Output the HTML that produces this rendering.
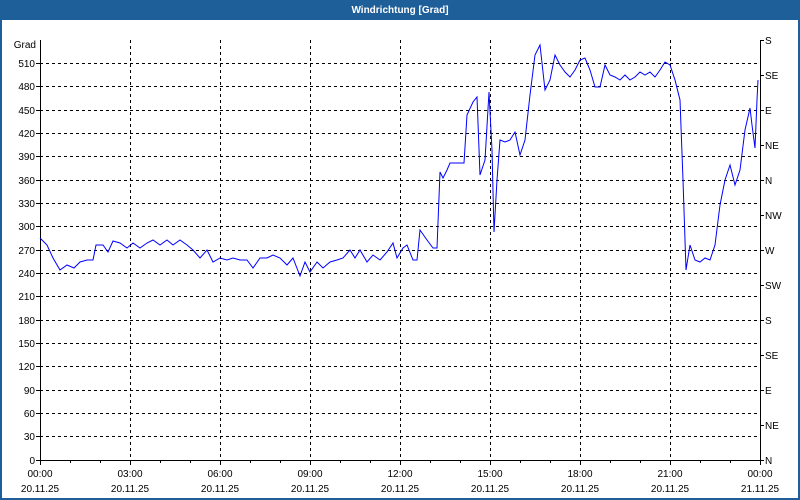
<!DOCTYPE html>
<html><head><style>
html,body{margin:0;padding:0;width:800px;height:500px;overflow:hidden;background:#fff;font-family:"Liberation Sans",sans-serif}
</style></head><body>
<svg width="800" height="500" xmlns="http://www.w3.org/2000/svg" font-family="Liberation Sans, sans-serif" font-size="10">
<rect x="0" y="0" width="800" height="500" fill="#1f5f99"/>
<rect x="2" y="20" width="796" height="478" fill="#fff"/>
<text x="400" y="13" fill="#fff" font-weight="bold" text-anchor="middle" font-size="10">Windrichtung [Grad]</text>
<g stroke="#000" stroke-dasharray="3,3" stroke-width="1">
<line x1="40" y1="63.5" x2="760" y2="63.5"/><line x1="40" y1="86.5" x2="760" y2="86.5"/><line x1="40" y1="110.5" x2="760" y2="110.5"/><line x1="40" y1="133.5" x2="760" y2="133.5"/><line x1="40" y1="156.5" x2="760" y2="156.5"/><line x1="40" y1="180.5" x2="760" y2="180.5"/><line x1="40" y1="203.5" x2="760" y2="203.5"/><line x1="40" y1="226.5" x2="760" y2="226.5"/><line x1="40" y1="250.5" x2="760" y2="250.5"/><line x1="40" y1="273.5" x2="760" y2="273.5"/><line x1="40" y1="296.5" x2="760" y2="296.5"/><line x1="40" y1="320.5" x2="760" y2="320.5"/><line x1="40" y1="343.5" x2="760" y2="343.5"/><line x1="40" y1="366.5" x2="760" y2="366.5"/><line x1="40" y1="390.5" x2="760" y2="390.5"/><line x1="40" y1="413.5" x2="760" y2="413.5"/><line x1="40" y1="436.5" x2="760" y2="436.5"/>
<line x1="130.5" y1="40" x2="130.5" y2="460"/><line x1="220.5" y1="40" x2="220.5" y2="460"/><line x1="310.5" y1="40" x2="310.5" y2="460"/><line x1="400.5" y1="40" x2="400.5" y2="460"/><line x1="490.5" y1="40" x2="490.5" y2="460"/><line x1="580.5" y1="40" x2="580.5" y2="460"/><line x1="670.5" y1="40" x2="670.5" y2="460"/>
</g>
<g stroke="#000" stroke-width="1">
<polyline points="40.5,40 40.5,460.5 760.5,460.5 760.5,40" fill="none"/>
<path d="M36 63.5h4M36 86.5h4M36 110.5h4M36 133.5h4M36 156.5h4M36 180.5h4M36 203.5h4M36 226.5h4M36 250.5h4M36 273.5h4M36 296.5h4M36 320.5h4M36 343.5h4M36 366.5h4M36 390.5h4M36 413.5h4M36 436.5h4M36 460.5h4"/>
<path d="M760 40.5h4M760 75.5h4M760 110.5h4M760 145.5h4M760 180.5h4M760 215.5h4M760 250.5h4M760 285.5h4M760 320.5h4M760 355.5h4M760 390.5h4M760 425.5h4M760 460.5h4"/>
<path d="M40.5 460v5M70.5 460v3M100.5 460v3M130.5 460v5M160.5 460v3M190.5 460v3M220.5 460v5M250.5 460v3M280.5 460v3M310.5 460v5M340.5 460v3M370.5 460v3M400.5 460v5M430.5 460v3M460.5 460v3M490.5 460v5M520.5 460v3M550.5 460v3M580.5 460v5M610.5 460v3M640.5 460v3M670.5 460v5M700.5 460v3M730.5 460v3M760.5 460v5"/>
</g>
<g text-anchor="end" fill="#000">
<text x="36" y="48">Grad</text>
<text x="35" y="67">510</text><text x="35" y="90">480</text><text x="35" y="114">450</text><text x="35" y="137">420</text><text x="35" y="160">390</text><text x="35" y="184">360</text><text x="35" y="207">330</text><text x="35" y="230">300</text><text x="35" y="254">270</text><text x="35" y="277">240</text><text x="35" y="300">210</text><text x="35" y="324">180</text><text x="35" y="347">150</text><text x="35" y="370">120</text><text x="35" y="394">90</text><text x="35" y="417">60</text><text x="35" y="440">30</text><text x="35" y="464">0</text>
</g>
<g fill="#000">
<text x="765" y="44">S</text><text x="765" y="79">SE</text><text x="765" y="114">E</text><text x="765" y="149">NE</text><text x="765" y="184">N</text><text x="765" y="219">NW</text><text x="765" y="254">W</text><text x="765" y="289">SW</text><text x="765" y="324">S</text><text x="765" y="359">SE</text><text x="765" y="394">E</text><text x="765" y="429">NE</text><text x="765" y="464">N</text>
</g>
<g text-anchor="middle" fill="#000">
<text x="40" y="477">00:00</text><text x="130" y="477">03:00</text><text x="220" y="477">06:00</text><text x="310" y="477">09:00</text><text x="400" y="477">12:00</text><text x="490" y="477">15:00</text><text x="580" y="477">18:00</text><text x="670" y="477">21:00</text><text x="760" y="477">00:00</text>
<text x="40" y="492">20.11.25</text><text x="130" y="492">20.11.25</text><text x="220" y="492">20.11.25</text><text x="310" y="492">20.11.25</text><text x="400" y="492">20.11.25</text><text x="490" y="492">20.11.25</text><text x="580" y="492">20.11.25</text><text x="670" y="492">20.11.25</text><text x="760" y="492">21.11.25</text>
</g>
<polyline fill="none" stroke="#0000ff" stroke-width="1" points="40,238 47,245 53,258 60,270 67,265 74,268 80,262 87,260 93,260 96,245 103,245 108,252 113,241 120,243 127,248 133,243 140,248 147,243 153,240 160,245 167,240 173,245 180,240 187,245 193,250 200,258 207,250 213,262 220,258 227,260 233,258 240,260 247,260 253,268 260,258 267,258 273,255 280,258 287,265 293,258 300,276 305,262 310,272 317,262 323,268 330,262 337,260 343,258 350,250 355,258 360,250 367,262 373,255 380,260 387,252 393,243 397,258 403,248 407,245 413,260 417,260 420,230 427,240 433,248 437,248 440,172 443,178 447,170 450,163 455,163 460,163 464,163 467,115 473,102 477,97 480,175 485,160 489,92 492,150 494,232 497,180 500,140 505,142 510,140 515,132 520,155 525,140 530,95 535,55 540,45 545,90 550,80 555,55 560,65 565,72 570,77 575,70 580,60 585,58 590,70 595,87 600,87 605,65 610,75 615,77 620,80 625,75 630,80 635,77 640,72 645,75 650,72 655,77 660,70 665,62 670,65 675,80 680,100 683,180 686,270 690,245 695,260 700,262 705,258 710,260 715,245 720,205 725,180 730,165 735,185 740,170 745,130 750,108 752,125 755,148 757,100 758,80"/>
</svg>
</body></html>
